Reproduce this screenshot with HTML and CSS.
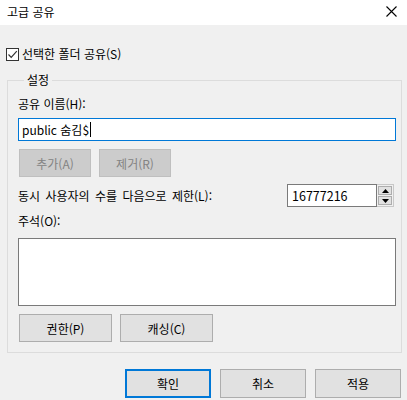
FILE: index.html
```html
<!DOCTYPE html>
<html lang="ko">
<head>
<meta charset="utf-8">
<link rel="stylesheet" href="styles.css">
</head>
<body>
<div class="dialog">
  <div class="titlebar">
    <span class="title">고급 공유</span>
    <svg class="close" width="11" height="11" viewBox="0 0 11 11"><path d="M0.5 0.5L10.5 10.5M10.5 0.5L0.5 10.5" stroke="#000" stroke-width="1.1" fill="none"/></svg>
  </div>
  <div class="content">
    <label class="check-row">
      <span class="checkbox"><svg width="11" height="11" viewBox="0 0 11 11"><path d="M1.5 5.5L4.2 8.3L9.8 2.2" stroke="#333" stroke-width="1.2" fill="none"/></svg></span>
      <span>선택한 폴더 공유(S)</span>
    </label>
    <fieldset class="group">
      <legend>설정</legend>
      <div class="label">공유 이름(H):</div>
      <div class="textbox focused">public 숨김$<span class="caret"></span></div>
      <div class="btn-row">
        <button class="btn small disabled">추가(A)</button>
        <button class="btn small disabled">제거(R)</button>
      </div>
      <div class="limit-row">
        <span class="limit-label">동시 사용자의 수를 다음으로 제한(L):</span>
        <div class="spin">
          <div class="spin-input">16777216</div>
          <div class="spin-btns">
            <div class="spin-btn"><svg width="7" height="4" viewBox="0 0 7 4"><path d="M3.5 0L7 4H0Z" fill="#000"/></svg></div>
            <div class="spin-btn"><svg width="7" height="4" viewBox="0 0 7 4"><path d="M0 0H7L3.5 4Z" fill="#000"/></svg></div>
          </div>
        </div>
      </div>
      <div class="label comment-label">주석(O):</div>
      <div class="textarea"></div>
      <div class="btn-row lower">
        <button class="btn medium">권한(P)</button>
        <button class="btn medium">캐싱(C)</button>
      </div>
    </fieldset>
    <div class="footer">
      <button class="btn wide default">확인</button>
      <button class="btn wide">취소</button>
      <button class="btn wide">적용</button>
    </div>
  </div>
</div>
</body>
</html>
```
FILE: styles.css
```css
* { box-sizing: border-box; }
html, body {
  margin: 0;
  padding: 0;
  width: 407px;
  height: 400px;
  overflow: hidden;
  background: #f0f0f0;
  font-family: "Noto Sans CJK KR", "Noto Sans", sans-serif;
  font-size: 12px;
  color: #000;
}
.dialog { width: 407px; height: 400px; }
.titlebar {
  height: 25px;
  background: #fff;
  display: flex;
  align-items: center;
  justify-content: space-between;
  padding: 0 10px 2px 7px;
}
.title { font-size: 12px; line-height: 16px; }
.close { display: block; }
.content { padding: 0; }
.check-row {
  display: flex;
  align-items: center;
  gap: 3px;
  margin: 21px 0 0 6px;
  height: 16px;
  line-height: 16px;
}
.checkbox {
  width: 13px;
  height: 13px;
  border: 1px solid #333;
  background: #fff;
  display: flex;
  align-items: center;
  justify-content: center;
}
.checkbox svg { display: block; }
.group {
  margin: 11px 5px 0 7px;
  padding: 10px 5px 10px 10px;
  border: 1px solid #dcdcdc;
  min-width: 0;
}
.group legend {
  padding: 0 3px;
  margin-left: 6px;
  line-height: 14px;
  height: 14px;
}
.label { line-height: 14px; height: 14px; }
.textbox {
  margin-top: 7px;
  height: 23px;
  background: #fff;
  border: 1px solid #7a7a7a;
  line-height: 20px;
  padding-left: 3px;
  display: flex;
  align-items: center;
}
.textbox.focused { border-color: #0078d7; }
.caret {
  display: inline-block;
  width: 1px;
  height: 15px;
  background: #000;
  margin-left: 1px;
}
.btn-row {
  display: flex;
  gap: 8px;
  margin-top: 8px;
  padding-left: 1px;
}
.btn {
  font-family: inherit;
  font-size: 12px;
  color: #000;
  background: #e1e1e1;
  border: 1px solid #adadad;
  height: 28px;
  padding: 0;
  margin: 0;
}
.btn.small { width: 72px; }
.btn.disabled { background: #cccccc; border-color: #bfbfbf; color: #838383; }
.btn.medium { width: 93px; }
.limit-row {
  margin-top: 7px;
  display: flex;
  align-items: center;
  justify-content: space-between;
  height: 23px;
  padding-right: 2px;
}
.limit-label { word-spacing: 2px; }
.spin { display: flex; height: 23px; }
.spin-input {
  width: 90px;
  height: 23px;
  background: #fff;
  border: 1px solid #7a7a7a;
  line-height: 21px;
  padding-left: 4px;
  font-size: 12.5px;
}
.spin-btns {
  width: 17px;
  height: 23px;
  border: 1px solid #c8c8c8;
  border-left: none;
  background: #f0f0f0;
  display: flex;
  flex-direction: column;
  padding: 1px;
  gap: 1px;
}
.spin-btn {
  flex: 1;
  background: #e1e1e1;
  border: 1px solid #adadad;
  display: flex;
  align-items: center;
  justify-content: center;
}
.spin-btn svg { display: block; }
.comment-label { margin-top: 7px; }
.textarea {
  margin-top: 10px;
  height: 68px;
  background: #fff;
  border: 1px solid #7a7a7a;
}
.btn-row.lower { margin-top: 8px; }
.footer {
  display: flex;
  justify-content: flex-end;
  gap: 9px;
  margin-top: 16px;
  padding-right: 6px;
}
.btn.wide { width: 86px; height: 29px; }
.btn.default { border: 2px solid #0078d7; }
```
